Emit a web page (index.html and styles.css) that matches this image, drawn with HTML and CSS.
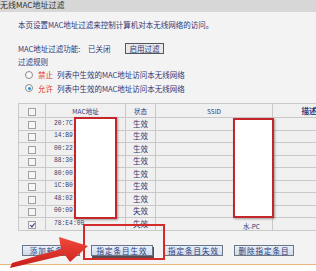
FILE: index.html
```html
<!DOCTYPE html>
<html lang="zh-CN">
<head>
    <meta charset="UTF-8">
    <title>无线MAC地址过滤</title>
    <link rel="stylesheet" href="styles.css">
</head>
<body>
    <div class="page">
        <div class="titlebar"><span>无线MAC地址过滤</span></div>

        <div class="content">
            <p class="desc">本页设置MAC地址过滤来控制计算机对本无线网络的访问。</p>

            <div class="filter-row">
                <span class="label">MAC地址过滤功能:</span>
                <span class="state">已关闭</span>
                <button class="plain-btn">启用过滤</button>
            </div>

            <p class="rules-title">过滤规则</p>
            <div class="rule">
                <span class="radio"></span>
                <span class="rule-key">禁止</span>
                <span>列表中生效的MAC地址访问本无线网络</span>
            </div>
            <div class="rule">
                <span class="radio checked"></span>
                <span class="rule-key">允许</span>
                <span>列表中生效的MAC地址访问本无线网络</span>
            </div>

            <table class="mac-table">
                <colgroup>
                    <col class="c-check">
                    <col class="c-mac">
                    <col class="c-state">
                    <col class="c-ssid">
                    <col class="c-note">
                </colgroup>
                <thead>
                    <tr>
                        <th><span class="box"></span></th>
                        <th>MAC地址</th>
                        <th>状态</th>
                        <th>SSID</th>
                        <th class="note">描述</th>
                    </tr>
                </thead>
                <tbody id="rows"></tbody>
            </table>
        </div>

        <div class="actions">
            <button class="act-btn w-add">添加新条目</button>
            <button class="act-btn w-on pressed">指定条目生效</button>
            <button class="act-btn w-off">指定条目失效</button>
            <button class="act-btn w-del">删除指定条目</button>
        </div>
        <div class="footer"></div>

        <!-- annotations drawn over the screenshot -->
        <div class="mask mask-mac"></div>
        <div class="mask mask-ssid"></div>
        <div class="mark"></div>
        <svg class="arrow" width="316" height="271" viewBox="0 0 316 271">
            <defs>
                <linearGradient id="red" x1="0" y1="0" x2="0" y2="1">
                    <stop offset="0" stop-color="#f2493a"/>
                    <stop offset="1" stop-color="#c71d1d"/>
                </linearGradient>
            </defs>
            <polygon points="10,268 12,263 61,249 59,237 88,246 70,262 65,255" fill="url(#red)"/>
        </svg>
    </div>

    <script>
        const entries = [
            { mac: '20:7C', state: '生效' },
            { mac: '14:B9', state: '生效' },
            { mac: '00:22', state: '生效' },
            { mac: '88:30', state: '生效' },
            { mac: '80:00', state: '生效' },
            { mac: '1C:B0', state: '生效' },
            { mac: '48:02', state: '生效' },
            { mac: '00:09', state: '失效' },
            { mac: '78:E4:00', state: '失效', ssid: '水-PC', checked: true }
        ];

        const tbody = document.getElementById('rows');
        entries.forEach(e => {
            const tr = document.createElement('tr');
            tr.innerHTML = `
                <td><span class="box ${e.checked ? 'on' : ''}"></span></td>
                <td class="mac">${e.mac}</td>
                <td>${e.state}</td>
                <td class="ssid">${e.ssid || ''}</td>
                <td></td>
            `;
            tbody.appendChild(tr);
        });
    </script>
</body>
</html>
```

FILE: styles.css
```css
body {
    margin: 0;
    background: #f3f3f3;
    font-family: "Noto Sans CJK SC", "Noto Sans", sans-serif;
    font-size: 7.5px;
    color: #2e3778;
    overflow: hidden;
}

.page {
    position: relative;
    width: 316px;
    height: 271px;
    overflow: hidden;
}

.titlebar {
    height: 12px;
    background: #d7d7d7;
    overflow: hidden;
}

.titlebar span {
    display: block;
    line-height: 9px;
    font-size: 8px;
    color: #333;
}

.content {
    padding-left: 18px;
}

.desc {
    margin: 7px 0 0 0;
    line-height: 12px;
}

.filter-row {
    display: flex;
    align-items: center;
    height: 12px;
    margin-top: 11px;
}

.filter-row .label {
    width: 70px;
}

.filter-row .state {
    width: 37px;
}

.plain-btn {
    height: 11px;
    width: 39px;
    padding: 0;
    border: 1px solid #55595f;
    background: #e6e8ea;
    font: inherit;
    color: #2e3778;
    line-height: 9px;
}

.rules-title {
    margin: 2px 0 0 0;
    line-height: 12px;
}

.rule {
    display: flex;
    align-items: center;
    height: 13.5px;
}

.radio {
    width: 6px;
    height: 6px;
    margin: 0 5px 0 7px;
    border: 1px solid #8c8c8c;
    border-radius: 50%;
    background: #fafafa;
    position: relative;
}

.radio.checked::after {
    content: "";
    position: absolute;
    left: 1.5px;
    top: 1.5px;
    width: 3px;
    height: 3px;
    border-radius: 50%;
    background: #2b8ec9;
}

.rule-key {
    color: #e23a32;
    width: 19px;
}

.mac-table {
    margin-top: 8px;
    border-collapse: collapse;
    table-layout: fixed;
    width: 327px;
    background: #f0f0f0;
}

.c-check { width: 27px; }
.c-mac { width: 80px; }
.c-state { width: 30px; }
.c-ssid { width: 117px; }
.c-note { width: 73px; }

.mac-table th,
.mac-table td {
    border: 1px solid #c9c9c9;
    padding: 0;
    text-align: center;
    font-weight: normal;
    white-space: nowrap;
    overflow: hidden;
}

.mac-table th {
    height: 13px;
    line-height: 10px;
    font-size: 6.5px;
}

.mac-table th.note {
    font-size: 7.5px;
    font-weight: bold;
}

.mac-table td {
    height: 11.5px;
    line-height: 10px;
}

.mac-table td.mac {
    text-align: left;
    padding-left: 8px;
    font-family: "Liberation Mono", monospace;
    font-size: 6.3px;
    color: #3a3f6a;
}

.mac-table td.ssid {
    text-align: right;
    padding-right: 12px;
    vertical-align: bottom;
    line-height: 8px;
    font-size: 6.5px;
}

.box {
    display: inline-block;
    width: 6px;
    height: 6px;
    border: 1px solid #a0a0a0;
    background: #f6f6f6;
    vertical-align: middle;
    position: relative;
}

.box.on::after {
    content: "";
    position: absolute;
    left: 1.5px;
    top: 0;
    width: 2px;
    height: 4px;
    border: solid #2e3778;
    border-width: 0 1px 1px 0;
    transform: rotate(40deg);
}

.actions {
    display: flex;
    gap: 11px;
    padding-left: 22px;
    margin-top: 14px;
}

.act-btn {
    height: 11px;
    padding: 0;
    border: 1px solid #6a7688;
    background: linear-gradient(#e7eff8, #cfdceb);
    font: inherit;
    letter-spacing: 1px;
    color: #2e3778;
    line-height: 9px;
}

.w-add { width: 58px; }
.w-on { width: 62px; }
.w-off { width: 59px; }
.w-del { width: 60px; }

.act-btn.pressed {
    box-shadow: 1px 2px 0 #5a4a52;
}

.footer {
    margin-top: 8px;
    height: 20px;
    border-top: 1px solid #e9b57a;
    background: #fff;
}

.mask {
    position: absolute;
    background: #fff;
    border: 2px solid #c5262a;
    box-shadow: 1px 1px 2px rgba(0, 0, 0, 0.35);
}

.mask-mac {
    left: 74px;
    top: 117px;
    width: 39px;
    height: 98px;
}

.mask-ssid {
    left: 233px;
    top: 118px;
    width: 37px;
    height: 96px;
}

.mark {
    position: absolute;
    left: 83px;
    top: 224px;
    width: 78px;
    height: 32px;
    border: 2px solid #d42a2a;
}

.arrow {
    position: absolute;
    left: 0;
    top: 0;
    pointer-events: none;
}
```
